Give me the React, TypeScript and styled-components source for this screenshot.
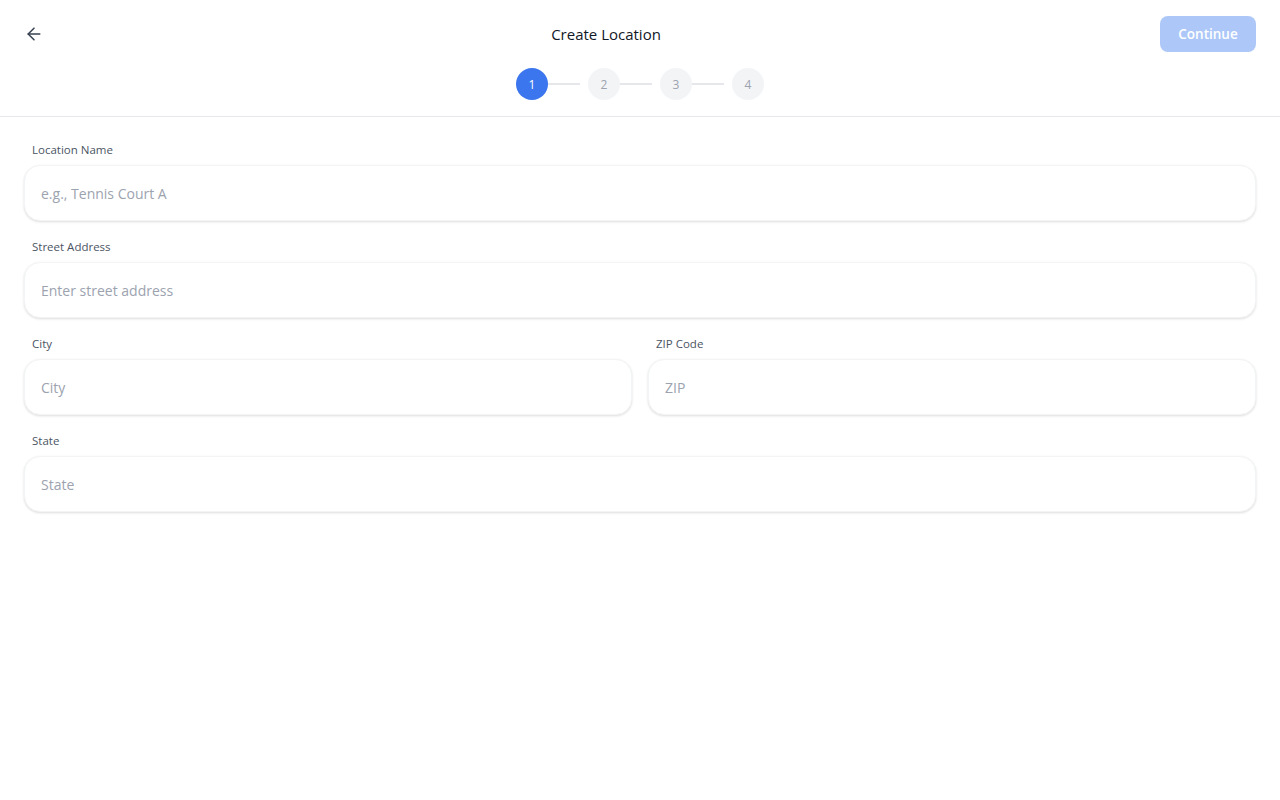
import styled, { createGlobalStyle } from 'styled-components'
import { ArrowLeft } from 'lucide-react'

const GlobalStyle = createGlobalStyle`
  body {
    margin: 0;
    background: #ffffff;
    font-family: 'Open Sans', 'Noto Sans', sans-serif;
    color: #111827;
  }
  * { box-sizing: border-box; }
`

const Page = styled.div`
  min-height: 800px;
  background: #ffffff;
`

const Header = styled.header`
  height: 117px;
  border-bottom: 1px solid #e5e7eb;
  padding: 16px 24px 0;
  display: flex;
  flex-direction: column;
  align-items: center;
`

const TopBar = styled.div`
  width: 100%;
  height: 36px;
  display: flex;
  align-items: center;
`

const BackButton = styled.button`
  background: none;
  border: none;
  padding: 0;
  width: 28px;
  height: 20px;
  color: #374151;
  display: flex;
  align-items: center;
  justify-content: flex-start;
  cursor: pointer;
`

const Title = styled.h1`
  flex: 1;
  margin: 0;
  text-align: center;
  font-size: 15px;
  font-weight: 400;
  color: #111827;
`

const ContinueButton = styled.button`
  width: 96px;
  height: 36px;
  border: none;
  border-radius: 8px;
  background: #adc8f8;
  color: #ffffff;
  font-family: inherit;
  font-size: 13.5px;
  font-weight: 600;
  cursor: not-allowed;
`

const Stepper = styled.div`
  margin-top: 16px;
  display: flex;
  align-items: center;
`

const StepItem = styled.div`
  display: flex;
  align-items: center;
`

const StepCircle = styled.div<{ $active?: boolean }>`
  width: 32px;
  height: 32px;
  border-radius: 50%;
  display: flex;
  align-items: center;
  justify-content: center;
  font-size: 12px;
  background: ${p => (p.$active ? '#3b76ef' : '#f3f4f6')};
  color: ${p => (p.$active ? '#ffffff' : '#9ca3af')};
`

const Connector = styled.div`
  width: 32px;
  height: 2px;
  background: #e5e7eb;
  margin-right: 8px;
`

const Form = styled.form`
  padding: 25px 24px;
  display: flex;
  flex-direction: column;
  gap: 18px;
`

const Row = styled.div`
  display: grid;
  grid-template-columns: 1fr 1fr;
  gap: 16px;
`

const Field = styled.div`
  display: flex;
  flex-direction: column;
  gap: 7px;
`

const Label = styled.label`
  padding-left: 8px;
  font-size: 11.5px;
  line-height: 16px;
  color: #4b5563;
`

const Input = styled.input`
  height: 56px;
  width: 100%;
  border: 1px solid #f3f4f6;
  border-radius: 16px;
  padding: 0 16px;
  background: #ffffff;
  box-shadow: 0 1px 3px rgba(0, 0, 0, 0.1), 0 1px 2px rgba(0, 0, 0, 0.04);
  font-family: inherit;
  font-size: 14px;
  color: #111827;

  &::placeholder {
    color: #9ca3af;
  }

  &:focus {
    outline: none;
    border-color: #3b76ef;
  }
`

const steps = [1, 2, 3, 4]

export default function App() {
  return (
    <Page>
      <GlobalStyle />
      <Header>
        <TopBar>
          <BackButton type="button" aria-label="Back">
            <ArrowLeft size={20} strokeWidth={1.8} />
          </BackButton>
          <Title>Create Location</Title>
          <ContinueButton type="button" disabled>
            Continue
          </ContinueButton>
        </TopBar>
        <Stepper>
          {steps.map((step, i) => (
            <StepItem key={step}>
              <StepCircle $active={i === 0}>{step}</StepCircle>
              {i < steps.length - 1 && <Connector />}
            </StepItem>
          ))}
        </Stepper>
      </Header>

      <Form onSubmit={e => e.preventDefault()}>
        <Field>
          <Label htmlFor="name">Location Name</Label>
          <Input id="name" placeholder="e.g., Tennis Court A" />
        </Field>
        <Field>
          <Label htmlFor="street">Street Address</Label>
          <Input id="street" placeholder="Enter street address" />
        </Field>
        <Row>
          <Field>
            <Label htmlFor="city">City</Label>
            <Input id="city" placeholder="City" />
          </Field>
          <Field>
            <Label htmlFor="zip">ZIP Code</Label>
            <Input id="zip" placeholder="ZIP" />
          </Field>
        </Row>
        <Field>
          <Label htmlFor="state">State</Label>
          <Input id="state" placeholder="State" />
        </Field>
      </Form>
    </Page>
  )
}
